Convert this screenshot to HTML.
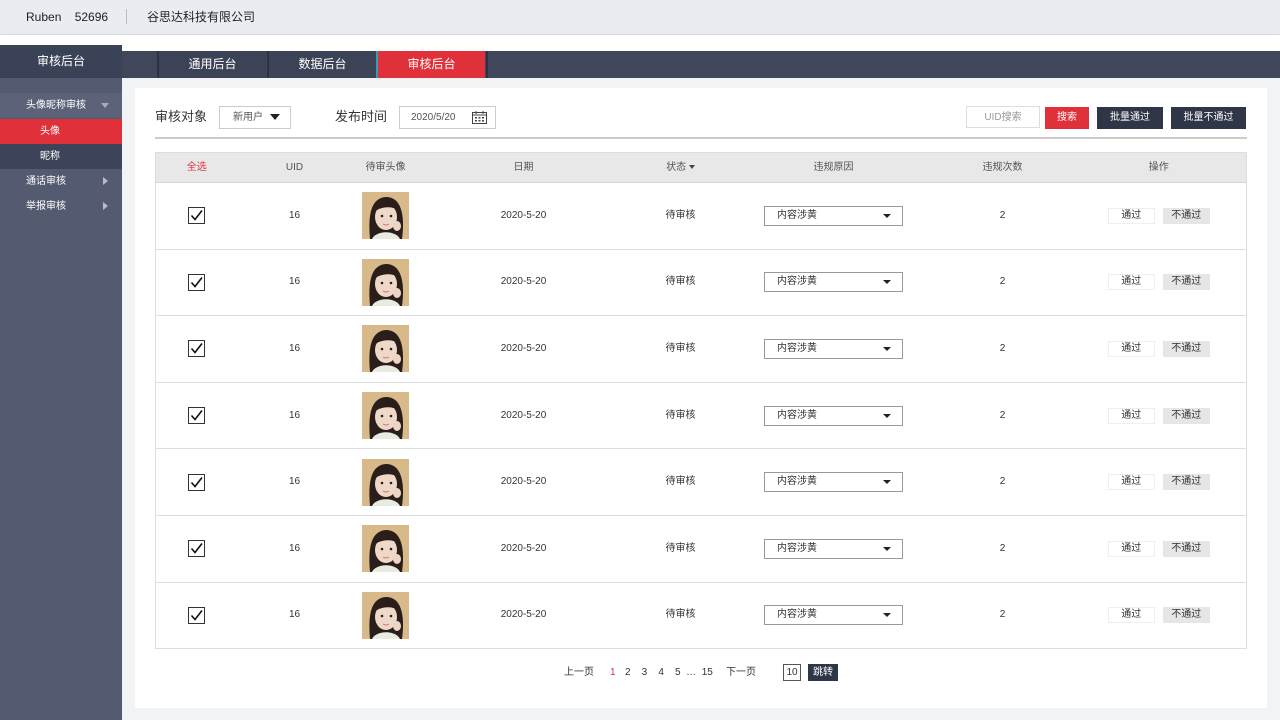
<!DOCTYPE html>
<html><head><meta charset="utf-8"><style>
*{margin:0;padding:0;box-sizing:border-box}
body{width:1280px;height:720px;overflow:hidden;background:#f2f3f5;font-family:"Liberation Sans","Noto Sans CJK SC",sans-serif;font-size:11px;color:#333;position:relative;line-height:14px}
.top{position:absolute;left:0;top:0;width:1280px;height:34px;background:#e9ecf1;box-shadow:0 1px 3px #c8ccd6}
.top span{position:absolute;top:10px;font-size:12px;color:#222;line-height:14px}
.gapw{position:absolute;left:0;top:35px;width:1280px;height:16px;background:#fff}
.sidehd{position:absolute;left:0;top:45px;width:122px;height:33px;background:#3a4257;color:#fff;font-size:12px;text-align:center;line-height:33px}
.side{position:absolute;left:0;top:78px;width:122px;height:642px;background:#545b70}
.si{position:absolute;left:0;width:122px;height:25px;line-height:25px;color:#fff;font-size:10px;padding-left:26px}
.tabs{position:absolute;left:122px;top:51px;width:1158px;height:27px;background:#40475a}
.tab{position:absolute;top:0;height:27px;width:109px;color:#fff;font-size:12px;text-align:center;line-height:27px;background:#3c4356;border-left:2px solid #2c3243}
.panel{position:absolute;left:135px;top:88px;width:1132px;height:620px;background:#fff}
.abs{position:absolute;line-height:14px}
.btn{position:absolute;height:22px;line-height:22px;text-align:center;font-size:10px}
table{position:absolute;left:155px;top:152px;width:1092px;border-collapse:collapse;border:1px solid #ddd}
th{height:30px;background:#e8e8e8;font-weight:normal;font-size:10px;color:#555;border-bottom:1px solid #d6d6d6;line-height:14px;vertical-align:middle}
td{height:66.6px;text-align:center;font-size:10px;color:#333;border-bottom:1px solid #ddd;vertical-align:middle;line-height:14px}
td>*{vertical-align:middle}
.cb{display:inline-block;width:17px;height:17px;border:1px solid #333;position:relative;top:0}
.sel{display:inline-block;width:139px;height:20px;border:1px solid #999;text-align:left;padding-left:12px;line-height:18px;position:relative}
.ok{display:inline-block;width:47px;height:16px;border:1px solid #eee;line-height:14px}
.no{display:inline-block;width:47px;height:16px;background:#e6e6e6;line-height:16px;margin-left:8px}
</style></head><body>
<div class="top"><span style="left:26px">Ruben&nbsp;&nbsp;&nbsp; 52696</span><span style="left:126px;top:9px;width:1px;height:15px;background:#bbb"></span><span style="left:147px">谷思达科技有限公司</span></div>
<div class="gapw"></div>
<div class="sidehd">审核后台</div>
<div class="side">
<div class="si" style="top:15px;background:#5c6378">头像昵称审核<span style="position:absolute;left:101px;top:10px;border:4px solid transparent;border-top:5px solid #aab;border-bottom:0"></span></div>
<div class="si" style="top:41px;background:#e0313b;padding-left:40px">头像</div>
<div class="si" style="top:66px;background:#3d4459;padding-left:40px">昵称</div>
<div class="si" style="top:91px">通话审核<span style="position:absolute;left:103px;top:8px;border:4px solid transparent;border-left:5px solid #bbc;border-right:0"></span></div>
<div class="si" style="top:116px">举报审核<span style="position:absolute;left:103px;top:8px;border:4px solid transparent;border-left:5px solid #bbc;border-right:0"></span></div>
</div>
<div class="tabs">
<div class="tab" style="left:35px">通用后台</div>
<div class="tab" style="left:145px">数据后台</div>
<div class="tab" style="left:254px;background:#e0313b;border-left:2px solid #3a9bb0">审核后台</div>
<div class="tab" style="left:364px;width:2px;background:#2c3243;border:0"></div>
</div>
<div class="panel"></div>
<div class="abs" style="left:155px;top:110px;font-size:13px;color:#333">审核对象</div>
<div class="abs" style="left:219px;top:106px;width:72px;height:23px;border:1px solid #ccc;font-size:10px;line-height:21px;padding-left:13px;color:#555">新用户<span style="position:absolute;left:50px;top:7px;border:5px solid transparent;border-top:6px solid #222;border-bottom:0"></span></div>
<div class="abs" style="left:335px;top:110px;font-size:13px;color:#333">发布时间</div>
<div class="abs" style="left:399px;top:106px;width:97px;height:23px;border:1px solid #ccc;font-size:10px;line-height:21px;padding-left:11px;color:#555">2020/5/20
<svg style="position:absolute;left:72px;top:4px" width="15" height="13" viewBox="0 0 15 13"><rect x="0.5" y="1.5" width="14" height="11" fill="none" stroke="#444"/><line x1="0.5" y1="4" x2="14.5" y2="4" stroke="#444"/><line x1="4" y1="0" x2="4" y2="3" stroke="#444"/><line x1="11" y1="0" x2="11" y2="3" stroke="#444"/><g fill="#444"><rect x="3" y="6" width="2" height="1.5"/><rect x="6.5" y="6" width="2" height="1.5"/><rect x="10" y="6" width="2" height="1.5"/><rect x="3" y="9" width="2" height="1.5"/><rect x="6.5" y="9" width="2" height="1.5"/><rect x="10" y="9" width="2" height="1.5"/></g></svg></div>
<div class="btn" style="left:966px;top:106px;width:74px;border:1px solid #ddd;color:#999">UID搜索</div>
<div class="btn" style="left:1045px;top:107px;width:44px;background:#e0313b;color:#fff">搜索</div>
<div class="btn" style="left:1097px;top:107px;width:66px;background:#2f3648;color:#fff">批量通过</div>
<div class="btn" style="left:1171px;top:107px;width:75px;background:#2f3648;color:#fff">批量不通过</div>
<div class="abs" style="left:155px;top:137px;width:1092px;height:2px;background:#ccc"></div>
<table>
<tr><th style="width:82px;color:#e0313b">全选</th><th style="width:114px">UID</th><th style="width:68px">待审头像</th><th style="width:208px">日期</th><th style="width:106px">状态 <span style="display:inline-block;vertical-align:middle;border:3px solid transparent;border-top:4px solid #444;border-bottom:0"></span></th><th style="width:200px">违规原因</th><th style="width:138px">违规次数</th><th>操作</th></tr>
</table>
<script>
var row='<tr><td><span class="cb"><svg width="15" height="15" viewBox="0 0 15 15" style="position:absolute;left:0;top:0"><path d="M2.5 7.5 L6 11.5 L13 2.5" fill="none" stroke="#111" stroke-width="1.6"/></svg></span></td><td>16</td><td><svg width="47" height="47" viewBox="0 0 47 47" style="vertical-align:middle"><rect width="47" height="47" fill="#d8b98a"/><path d="M8 47 C6 25 8 6 24 5 C40 5 43 25 40 47 Z" fill="#2a1e1a"/><ellipse cx="24" cy="25" rx="11" ry="13" fill="#f0d8c8"/><path d="M12 20 C14 10 32 9 36 18 C30 14 20 14 12 20Z" fill="#2a1e1a"/><path d="M10 47 C14 38 34 38 38 47Z" fill="#e8ece0"/><circle cx="20" cy="24" r="1.3" fill="#222"/><circle cx="29" cy="24" r="1.3" fill="#222"/><path d="M21 32 Q24 34 27 32" stroke="#c77" fill="none"/><ellipse cx="35" cy="34" rx="4" ry="5" fill="#eed4c4"/></svg></td><td>2020-5-20</td><td>待审核</td><td><span class="sel">内容涉黄<span style="position:absolute;left:118px;top:7px;border:4px solid transparent;border-top:4px solid #222;border-bottom:0"></span></span></td><td>2</td><td><span class="ok">通过</span><span class="no">不通过</span></td></tr>';
document.querySelector('table tbody').insertAdjacentHTML('beforeend',row.repeat(7));
</script>
<div class="abs" style="left:564px;top:666px;font-size:10px;color:#333">上一页</div>
<div class="abs" style="left:610px;top:666px;font-size:10px;color:#e0313b">1</div>
<div class="abs" style="left:625px;top:666px;font-size:10px">2&nbsp;&nbsp;&nbsp; 3&nbsp;&nbsp;&nbsp; 4&nbsp;&nbsp;&nbsp; 5&nbsp; …&nbsp; 15</div>
<div class="abs" style="left:726px;top:666px;font-size:10px">下一页</div>
<div class="abs" style="left:783px;top:664px;width:18px;height:17px;border:1px solid #555;font-size:10px;text-align:center;line-height:15px">10</div>
<div class="abs" style="left:808px;top:664px;width:30px;height:17px;background:#2f3648;color:#fff;font-size:10px;text-align:center;line-height:17px">跳转</div>
</body></html>
